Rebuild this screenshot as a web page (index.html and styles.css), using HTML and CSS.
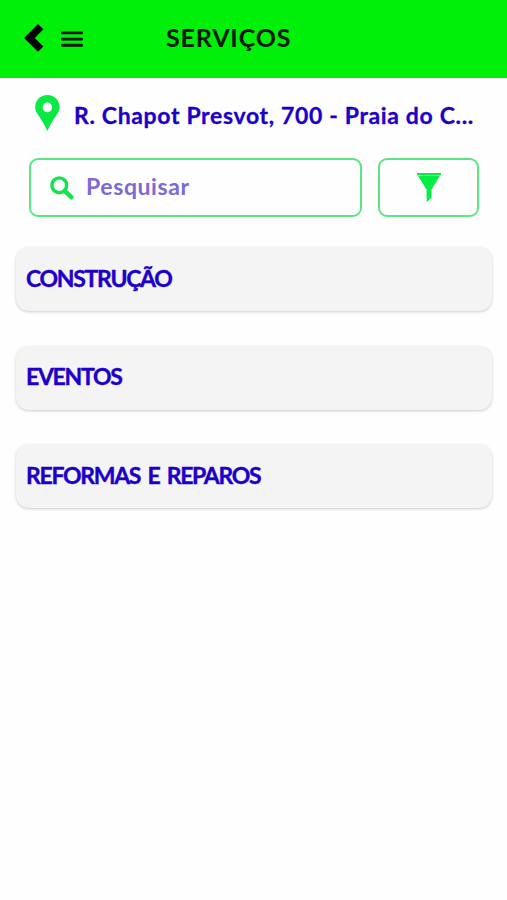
FILE: index.html
```html
<!DOCTYPE html>
<html lang="pt-br">
<head>
	<meta charset="UTF-8">
	<meta name="viewport" content="width=device-width,initial-scale=1.0">
	<title>Serviços</title>
	<link rel="stylesheet" href="styles.css">
</head>
<body>
	<!-- topo -->
	<header class="header">
		<a class="back" href="#">
			<svg width="20" height="28" viewBox="0 0 20 28"><path d="M0 14L14 0L19.3 5.2L10.8 14L19.3 22.4L14 27.8Z"/></svg>
		</a>
		<a class="menu" href="#">
			<svg width="22" height="16" viewBox="0 0 22 16"><path d="M1.4 1.9H20.6M1.4 8.1H20.6M1.4 14.2H20.6"/></svg>
		</a>
		<h1 class="title">SERVIÇOS</h1>
	</header>
	<!-- endereço -->
	<div class="address">
		<svg width="25" height="36" viewBox="0 0 25 36"><path fill-rule="evenodd" d="M12.4 0C5.4 0 .2 5.3 .2 12C.2 18.8 6 21.5 12.4 36C18.8 21.5 24.6 18.8 24.6 12C24.6 5.3 19.4 0 12.4 0ZM12.4 7.6A4.8 4.8 0 1 1 12.4 17.2A4.8 4.8 0 1 1 12.4 7.6Z"/></svg>
		<span class="street">R. Chapot Presvot, 700 - Praia do C...</span>
	</div>
	<!-- busca e filtro -->
	<div class="search">
		<div class="field">
			<svg width="24" height="24" viewBox="0 0 24 24"><circle cx="9.3" cy="9.3" r="7.4"/><path d="M14.8 14.8L21.2 21.2"/></svg>
			<span class="placeholder">Pesquisar</span>
		</div>
		<a class="filter" href="#">
			<svg width="24" height="30" viewBox="0 0 24 30"><path d="M0 0H24V2.2H0ZM1 2.8H23L14.4 16.8V25L9.6 29V16.8Z"/></svg>
		</a>
	</div>
	<!-- categorias -->
	<ul class="list">
		<li>CONSTRUÇÃO</li>
		<li>EVENTOS</li>
		<li>REFORMAS E REPAROS</li>
	</ul>
</body>
</html>
```

FILE: styles.css
```css
*{
	margin: 0;
	padding: 0;
	box-sizing: border-box;
}
body{
	background: #fefefe;
	color: #1c00c8;
	font: bold 23px Lato, "Open Sans", sans-serif;
}
a{
	text-decoration: none;
}
svg{
	display: block;
	flex: none;
}
/* topo */
.header{
	display: flex;
	align-items: center;
	height: 78px;
	padding: 0 0 2px 24px;
	background: #00f00a;
	color: #031803;
}
.back{
	margin-right: 17px;
}
.menu{
	padding-top: 1px;
}
.menu svg{
	fill: none;
	stroke: #031803;
	stroke-width: 2.9;
	stroke-linecap: round;
}
.title{
	margin-left: 83px;
	margin-top: -3px;
	font-size: 25px;
	letter-spacing: 0.85px;
}
/* endereço */
.address{
	display: flex;
	align-items: center;
	height: 80px;
	padding: 0 0 11px 35px;
}
.address svg{
	fill: #0aea46;
}
.street{
	margin-left: 14px;
	padding-top: 4px;
	letter-spacing: 0.65px;
	white-space: nowrap;
	-webkit-text-stroke: 0.3px #1c00c8;
}
/* busca e filtro */
.search{
	display: flex;
	gap: 16px;
	padding-left: 29px;
}
.field,
.filter{
	display: flex;
	align-items: center;
	height: 59px;
	border: 2px solid #5ce682;
	border-radius: 9px;
}
.field{
	width: 333px;
	padding-left: 19px;
}
.field svg{
	fill: none;
	stroke: #14e24e;
	stroke-width: 3.4;
}
.field path{
	stroke-width: 4.6;
	stroke-linecap: round;
}
.placeholder{
	margin-left: 12px;
	margin-top: -4px;
	color: #7b6ad8;
	letter-spacing: 0.6px;
}
.filter{
	width: 101px;
	justify-content: center;
}
.filter svg{
	fill: #06ee45;
}
/* categorias */
.list{
	padding: 30px 15px 0 16px;
	list-style: none;
}
.list li{
	display: flex;
	align-items: center;
	height: 64px;
	margin-bottom: 34.5px;
	padding: 0 0 3px 10px;
	background: #f4f4f4;
	border-radius: 13px;
	box-shadow: 0 1px 3px rgba(0,0,0,0.2);
	letter-spacing: -1.3px;
	word-spacing: 3px;
	-webkit-text-stroke: 0.4px #1c00c8;
}
```
